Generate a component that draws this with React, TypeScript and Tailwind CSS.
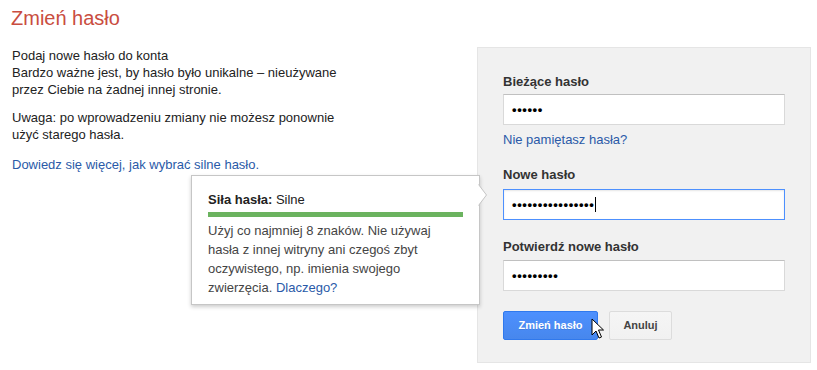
import { ReactNode } from 'react';

function PasswordField({ dots, focused }: { dots: number; focused?: boolean }) {
  return (
    <div
      className={`flex h-[31px] w-[282px] items-center bg-white pl-[8px] ${
        focused
          ? 'border border-[#4d90fe] shadow-[inset_0_1px_2px_rgba(0,0,0,0.1)]'
          : 'border border-[#d9d9d9] border-t-[#c0c0c0]'
      }`}
    >
      <span className="text-[13px] leading-none font-bold tracking-[0.6px] text-black">{'•'.repeat(dots)}</span>
      {focused && <span className="ml-[1px] h-[15px] w-px bg-black" />}
    </div>
  );
}

function Label({ children, className = '' }: { children: ReactNode; className?: string }) {
  return <div className={`text-[13px] leading-[16px] font-bold text-[#333] ${className}`}>{children}</div>;
}

function Pointer() {
  return (
    <svg className="absolute left-[591px] top-[318px]" width="14" height="22" viewBox="0 0 14 22">
      <path d="M1 1 L1 17 L5 13 L8 20 L10.5 19 L7.5 12 L12.5 12 Z" fill="#fff" stroke="#000" strokeWidth="1" strokeLinejoin="round" />
    </svg>
  );
}

export default function App() {
  return (
    <div className="relative h-[370px] w-[817px] overflow-hidden bg-white font-['Liberation_Sans',Arial,sans-serif] text-[#222]">
      <h1 className="pl-[11px] pt-[5px] text-[20px] leading-[26px] font-normal text-[#c94d40]">Zmień hasło</h1>

      <div className="mt-[16px] flex">
        <div className="w-[477px] pl-[12px] text-[13px] leading-[17px]">
          <p>
            Podaj nowe hasło do konta
            <br />
            Bardzo ważne jest, by hasło było unikalne – nieużywane
            <br />
            przez Ciebie na żadnej innej stronie.
          </p>
          <p className="mt-[11px]">
            Uwaga: po wprowadzeniu zmiany nie możesz ponownie
            <br />
            użyć starego hasła.
          </p>
          <p className="mt-[13px]">
            <a className="text-[#2a5aa8]">Dowiedz się więcej, jak wybrać silne hasło.</a>
          </p>
        </div>

        <div className="h-[316px] w-[334px] border border-[#e5e5e5] bg-[#f1f1f1] pl-[25px] pt-[26px]">
          <Label>Bieżące hasło</Label>
          <div className="mt-[4px]">
            <PasswordField dots={6} />
          </div>
          <a className="mt-[7px] block text-[13px] leading-[16px] text-[#2a5aa8]">Nie pamiętasz hasła?</a>
          <Label className="mt-[19px]">Nowe hasło</Label>
          <div className="mt-[6px]">
            <PasswordField dots={16} focused />
          </div>
          <Label className="mt-[19px]">Potwierdź nowe hasło</Label>
          <div className="mt-[5px]">
            <PasswordField dots={9} />
          </div>
          <div className="mt-[20px] flex gap-[11px]">
            <button className="h-[29px] w-[95px] rounded-[2px] border border-[#3079ed] bg-gradient-to-b from-[#4d90fe] to-[#4787ed] text-[11px] font-bold text-white [text-shadow:0_1px_rgba(0,0,0,0.1)]">
              Zmień hasło
            </button>
            <button className="h-[29px] w-[63px] rounded-[2px] border border-[#dcdcdc] bg-gradient-to-b from-[#f5f5f5] to-[#f1f1f1] text-[11px] font-bold text-[#444]">
              Anuluj
            </button>
          </div>
        </div>
      </div>

      {/* strength tooltip */}
      <div className="absolute left-[191px] top-[175px] h-[130px] w-[289px] border border-[#c6c6c6] bg-white px-[16px] pt-[16px] shadow-[0_2px_4px_rgba(0,0,0,0.2)]">
        <div className="text-[13px] leading-[16px] text-[#222]">
          <span className="font-bold">Siła hasła:</span> Silne
        </div>
        <div className="mt-[4px] h-[5px] w-[255px] bg-[#6bb35f]" />
        <p className="mt-[4px] text-[13px] leading-[19px] text-[#444]">
          Użyj co najmniej 8 znaków. Nie używaj
          <br />
          hasła z innej witryny ani czegoś zbyt
          <br />
          oczywistego, np. imienia swojego
          <br />
          zwierzęcia. <a className="text-[#2a5aa8]">Dlaczego?</a>
        </p>
        <svg className="absolute left-[286px] top-[8px]" width="10" height="22" viewBox="0 0 10 22">
          <path d="M0 0 L8 11 L0 22 Z" fill="#fff" />
          <path d="M0.5 0.5 L8.5 11 L0.5 21.5" fill="none" stroke="#c6c6c6" strokeWidth="1" />
        </svg>
      </div>

      <Pointer />
    </div>
  );
}
